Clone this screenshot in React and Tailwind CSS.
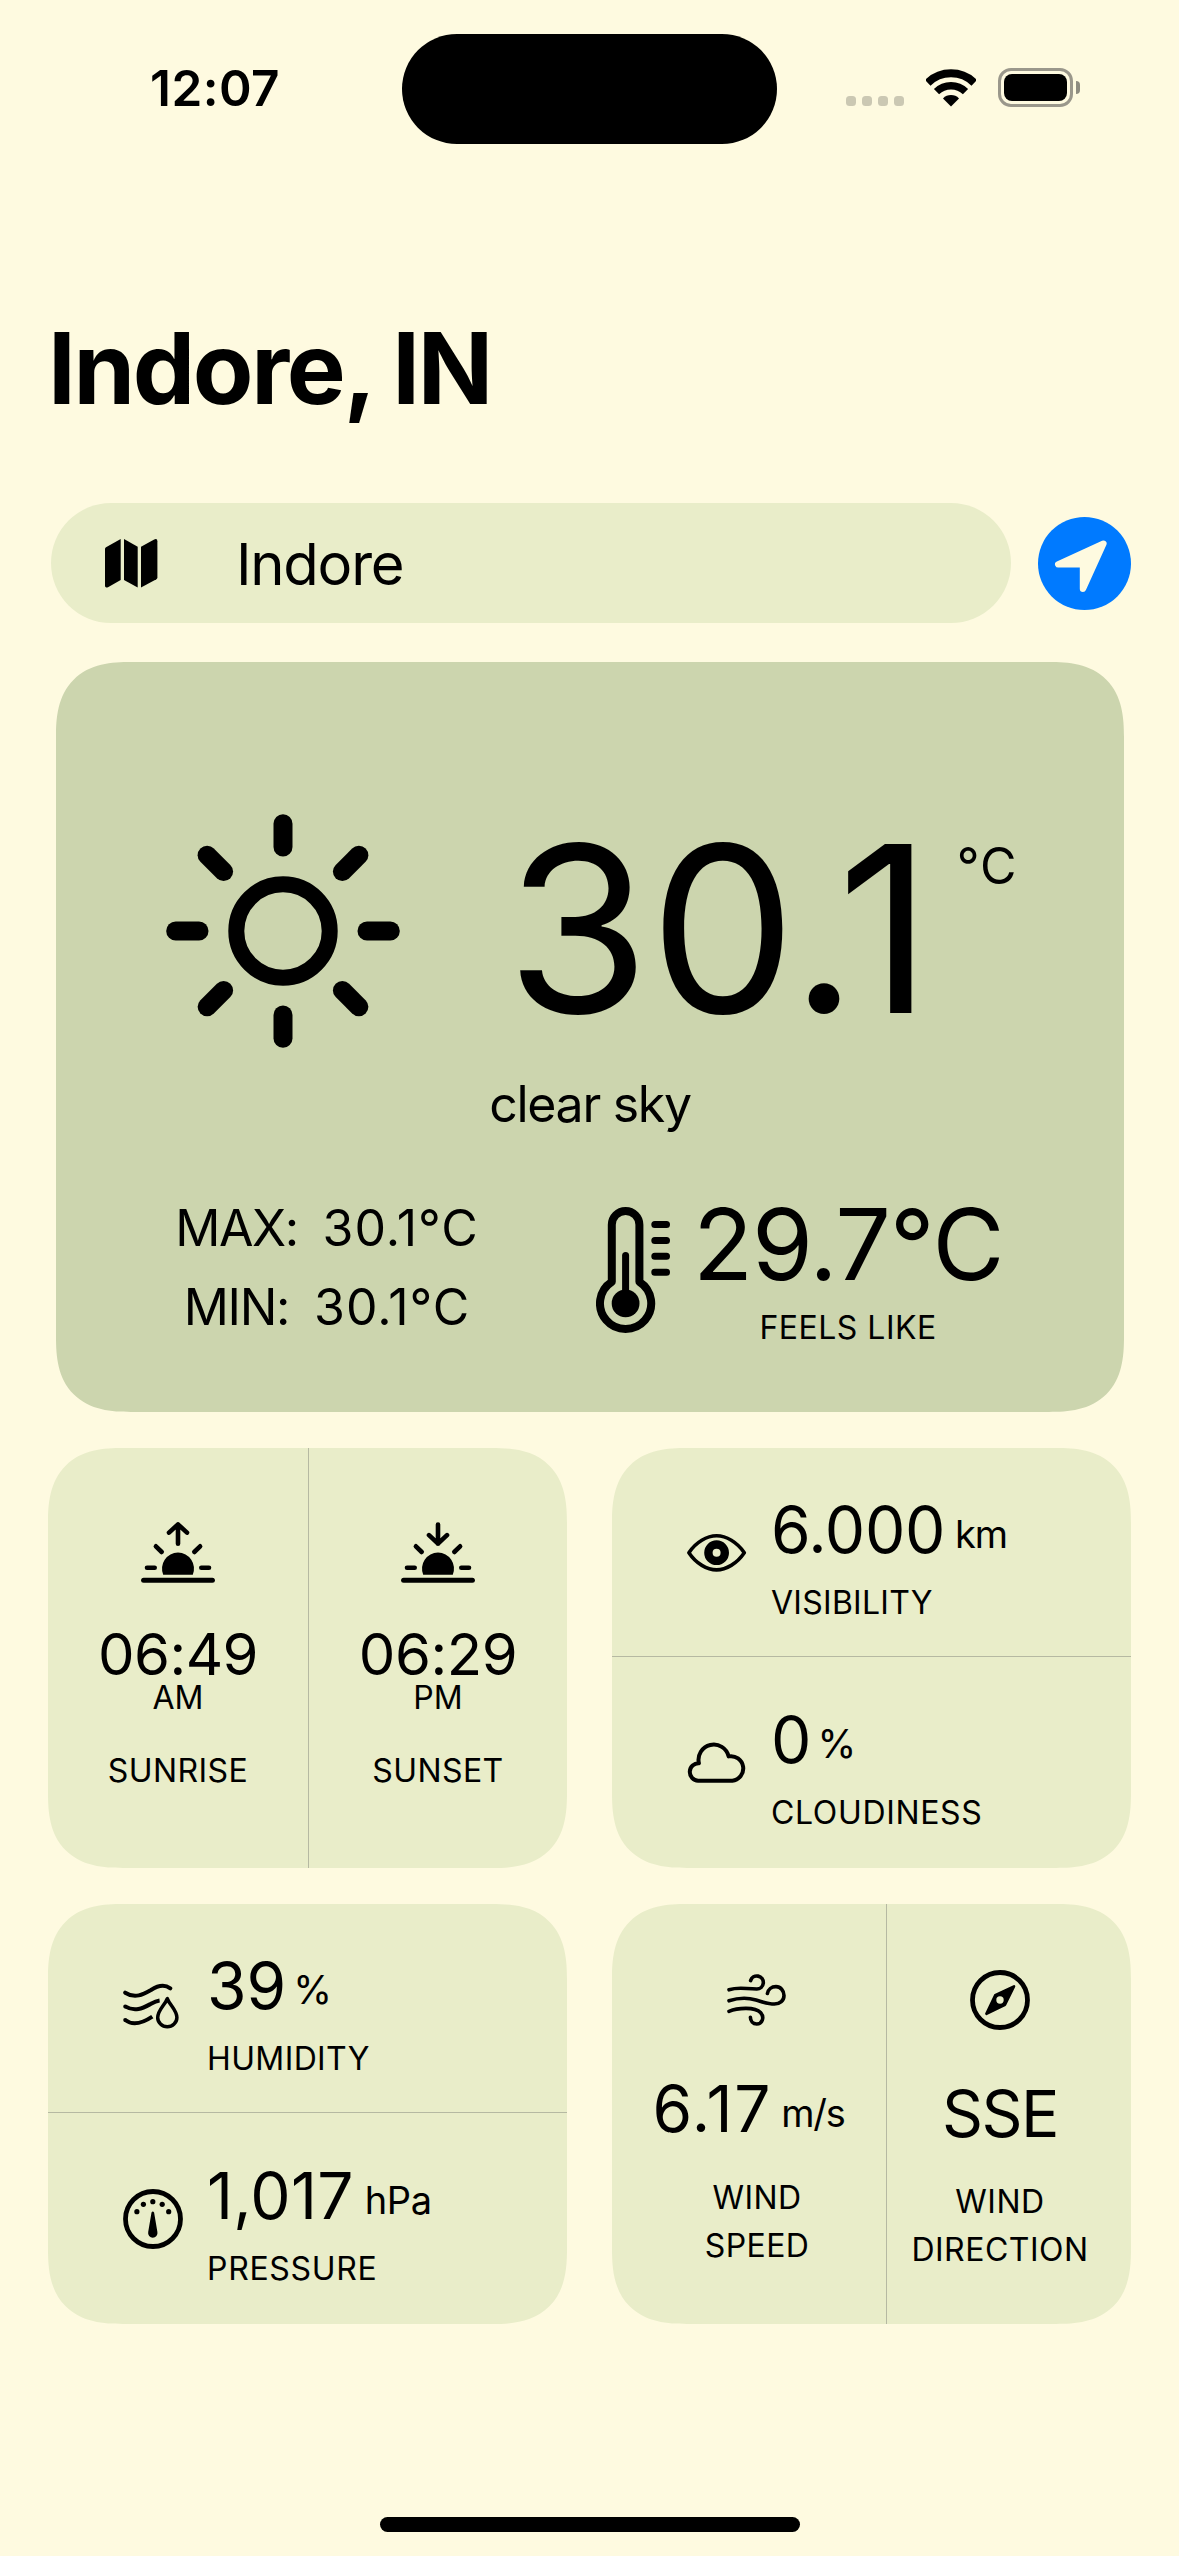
import React from "react";

function WifiIcon() {
  return (
    <svg className="h-[38px] w-[50px]" viewBox="0 0 50 38" fill="none">
      <path d="M1.7 13.8A33.2 33.2 0 0 1 48.3 13.8" stroke="#000" strokeWidth="8" />
      <path d="M10.5 22.7A20.7 20.7 0 0 1 39.5 22.7" stroke="#000" strokeWidth="7.4" />
      <path d="M25 37.5L17 29.4A11.4 11.4 0 0 1 33 29.4Z" fill="#000" />
    </svg>
  );
}

function Battery() {
  return (
    <div className="flex items-center gap-[3px]">
      <div className="flex h-[39px] w-[75px] items-center justify-center rounded-[13px] border-[3px] border-[#9a978b]">
        <div className="h-[27px] w-[63px] rounded-[8px] bg-black" />
      </div>
      <div className="h-[13px] w-[4px] rounded-r-full bg-[#8e8c80]" />
    </div>
  );
}

function StatusBar() {
  return (
    <header className="flex h-[177px] items-center">
      <div className="w-[402px] pb-[2px] pl-[150px] text-[49.5px] leading-[60px] font-semibold tracking-[0.009em]">12:07</div>
      <div className="mt-px h-[110px] w-[375px] rounded-full bg-black" />
      <div className="ml-[69px] flex h-[39px] items-end gap-[6px]">
        {[0, 1, 2, 3].map((i) => (
          <div key={i} className="mb-[2px] size-[10px] rounded-[3.5px] bg-[#cbc8b3]" />
        ))}
      </div>
      <div className="ml-[22px] pb-[2px]"><WifiIcon /></div>
      <div className="ml-[22px] pb-[2px]"><Battery /></div>
    </header>
  );
}

function MapIcon() {
  return (
    <svg className="h-[49px] w-[53px]" viewBox="0 0 53 49" fill="#000">
      <path d="M0 9.8Q0 8.8 1 8.2L15.7 0V41L3 48.2Q0 49.4 0 46.8Z" />
      <path d="M19 0L32.7 7.7V48.5L19 41Z" />
      <path d="M36 7.7L49.2 .4Q52.4 -.9 52.4 2.2V38.4Q52.4 39.6 51.4 40.2L36 48.5Z" />
    </svg>
  );
}

function LocationButton() {
  return (
    <button className="flex size-[93px] items-center justify-center rounded-full bg-[#007aff]">
      <svg className="size-[93px]" viewBox="0 0 93 93">
        <path d="M65.4 26.7L20.2 47.3H45V71.8Z" fill="#fefae0" stroke="#fefae0" strokeWidth="6.4" strokeLinejoin="round" />
      </svg>
    </button>
  );
}

function SunIcon() {
  return (
    <svg className="size-[234px]" viewBox="-117 -117 234 234" fill="none" stroke="#000">
      <circle r="46.7" strokeWidth="16" />
      {[0, 45, 90, 135, 180, 225, 270, 315].map((a) => (
        <path key={a} d="M0 -84V-107.3" strokeWidth="19" strokeLinecap="round" transform={`rotate(${a})`} />
      ))}
    </svg>
  );
}

function ThermometerIcon() {
  return (
    <svg className="h-[127px] w-[75px]" viewBox="0 0 75 127" fill="none" stroke="#000" strokeLinecap="round" strokeLinejoin="round">
      <path d="M15.8 17.8A13.8 13.8 0 0 1 43.4 17.8V74.8A25.6 25.6 0 1 1 15.8 74.8Z" strokeWidth="8" />
      <path d="M29.6 48.5V90" strokeWidth="7" />
      <circle cx="29.6" cy="96.4" r="13.9" fill="#000" stroke="none" />
      <path d="M58.8 17.5H70.5M58.8 33.4H70.5M58.8 49.3H70.5M58.8 65.3H70.5" strokeWidth="7" />
    </svg>
  );
}

function HorizonIcon({ rising }) {
  return (
    <svg className="h-[62px] w-[74px]" viewBox="0 0 74 62" fill="none" stroke="#000" strokeWidth="4.6" strokeLinecap="round" strokeLinejoin="round">
      <path d="M2.6 58.2H71.4" strokeWidth="5" />
      <path d="M6 45.7H13.7M60.3 45.7H68M14.9 24.3L20.7 30M59.1 24.3L53.3 30" />
      <path d="M22.2 52.7A16 16 0 1 1 51.8 52.7Z" fill="#000" stroke="none" />
      {rising ? (
        <path d="M37 2.5V21.7M28 10.6L37 2.4L46 10.6" />
      ) : (
        <path d="M37 2.5V21.7M28 13.2L37 21.7L46 13.2" />
      )}
    </svg>
  );
}

function EyeIcon() {
  return (
    <svg className="size-[60px]" viewBox="0 0 60 60" fill="none" stroke="#000">
      <path d="M1.9 29.7C9 19 20 12.8 29.6 12.8S50 19 57.3 29.7C50 40.5 39 46.9 29.6 46.9S9 40.5 1.9 29.7Z" strokeWidth="3.6" strokeLinejoin="round" />
      <circle cx="29.6" cy="29.7" r="8.2" strokeWidth="8.4" />
    </svg>
  );
}

function CloudIcon() {
  return (
    <svg className="size-[60px]" viewBox="0 0 60 60" fill="none" stroke="#000" strokeWidth="4" strokeLinejoin="round">
      <path d="M11.1 47.7H45.3A12.3 12.3 0 1 0 41.6 23.4A15.2 15.2 0 0 0 11.9 30.3A8.7 8.7 0 0 0 11.1 47.7Z" />
    </svg>
  );
}

function HumidityIcon() {
  return (
    <svg className="size-[60px]" viewBox="0 0 60 60" fill="none" stroke="#000" strokeWidth="4" strokeLinejoin="round">
      <path d="M2.2 13.7C12 20 20 15.5 28 11C35 6.5 42 5.5 47.3 9.3" strokeLinecap="round" />
      <path d="M2.2 27.4C12 33.5 20 29 28 24.8C31 23 33.5 21.8 36.6 21.4" />
      <path d="M2.2 41C10 47 20 43.8 29.3 37.6" />
      <path d="M2.2 27.4h.01M2.2 41h.01" strokeLinecap="round" />
      <path d="M44.3 19.6C42 26 34.7 31 34.7 38.6A9.6 9.2 0 0 0 53.9 38.6C53.9 31 46.6 26 44.3 19.6Z" strokeWidth="3.5" />
    </svg>
  );
}

function GaugeIcon() {
  return (
    <svg className="size-[60px]" viewBox="0 0 60 60">
      <circle cx="30" cy="30" r="27.5" fill="none" stroke="#000" strokeWidth="4.8" />
      {[[13.9, 22.7], [20.4, 15.3], [29.8, 12.7], [39.2, 15.3], [45.7, 22.7]].map(([x, y]) => (
        <circle key={x} cx={x} cy={y} r="2.6" />
      ))}
      <path d="M28.5 23.6Q29.8 21.4 31.1 23.6L34.4 43A4.7 4.7 0 1 1 25.2 43Z" />
    </svg>
  );
}

function WindIcon() {
  return (
    <svg className="h-[52px] w-[60px]" viewBox="0 0 60 52" fill="none" stroke="#000" strokeWidth="3.6" strokeLinecap="round">
      <path d="M2 15.8C12 12.6 18 15 29.7 15A6.5 6.5 0 1 0 23.6 6.6" />
      <path d="M2 26.8C12 23.5 20 23.3 29 26C36 28 41 30 47.4 30C53 30 57 26.5 57 21.5C57 16.5 53.5 12.6 49 12.6C44.5 12.6 41 15.5 40.4 19.5" />
      <path d="M2 37.3C10 34 28 32.5 33.5 38.5C38 43.5 35 50 29.7 50C26 50 23.4 47 23.4 43.3" />
    </svg>
  );
}

function CompassIcon() {
  return (
    <svg className="size-[60px]" viewBox="0 0 60 60">
      <circle cx="30" cy="30" r="27.5" fill="none" stroke="#000" strokeWidth="4.8" />
      <path d="M44 16.4L35 34.8L16.4 43.8L25.2 25.2Z" stroke="#000" strokeWidth="2.6" strokeLinejoin="round" />
      <circle cx="30" cy="30" r="3.7" fill="#e9edc9" />
    </svg>
  );
}

function Card({ className, children }) {
  return (
    <section className={`overflow-hidden rounded-[75px] [corner-shape:superellipse(1.37)] ${className}`}>
      {children}
    </section>
  );
}

function Metric({ icon, value, valueClass = "", unit, unitClass, label, labelClass, className }) {
  return (
    <div className={`flex pl-[75px] ${className}`}>
      <div className="mt-[25px] mr-[24px] size-[60px]">{icon}</div>
      <div>
        <div className="flex h-[64px]">
          <span className={`text-[64px] leading-[64px] ${valueClass}`}>{value}</span>
          <span className={`pt-[4px] leading-[64px] ${unitClass}`}>{unit}</span>
        </div>
        <div className={`mt-[19px] text-[32px] leading-[44px] ${labelClass}`}>{label}</div>
      </div>
    </div>
  );
}

function SunTime({ rising, time, timeClass, half, label, className }) {
  return (
    <div className={`flex flex-col items-center pt-[74px] ${className}`}>
      <HorizonIcon rising={rising} />
      <div className={`mt-[48px] text-[58px] leading-[44px] ${timeClass}`}>{time}</div>
      <div className="text-[32px] leading-[44px]">{half}</div>
      <div className="mt-[29px] text-[32px] leading-[44px] tracking-[0.013em]">{label}</div>
    </div>
  );
}

export default function App() {
  return (
    <div className="flex h-[2556px] w-[1179px] flex-col overflow-hidden bg-[#fefae0] font-[Inter,sans-serif] whitespace-nowrap text-black">
      <StatusBar />

      <h1 className="mt-[131px] pl-[48px] text-[99px] leading-[120px] font-bold tracking-[-0.0235em]">Indore, IN</h1>

      <div className="mt-[75px] flex items-center gap-[27px] pl-[51px]">
        <div className="flex h-[120px] w-[960px] items-center rounded-[60px] bg-[#e9edc9] pl-[54px]">
          <MapIcon />
          <span className="ml-[78px] pt-[2px] text-[58px] leading-[72px] tracking-[-0.0215em]">Indore</span>
        </div>
        <LocationButton />
      </div>

      <Card className="mx-[56px] mt-[39px] h-[750px] w-[1068px] shrink-0 bg-[#ccd5ae] pt-[152px]">
        <div className="flex h-[234px] pl-[110px]">
          <SunIcon />
          <span className="ml-[106px] text-[232.5px] leading-[229px]">30.1</span>
          <span className="ml-[25px] text-[50px] leading-[104px] tracking-[0.02em]">°C</span>
        </div>
        <div className="mt-[26px] text-center text-[50px] leading-[60px] tracking-[-0.0255em]">clear sky</div>
        <div className="mt-[54px] flex">
          <div className="ml-[121px] w-[300px] pt-[1px] text-[50px] leading-[79px]">
            <div className="flex justify-center gap-[25px]">
              <span className="tracking-[-0.029em]">MAX:</span>
              <span className="tracking-[0.0196em]">30.1°C</span>
            </div>
            <div className="flex justify-center gap-[25px]">
              <span className="tracking-[-0.0264em]">MIN:</span>
              <span className="tracking-[0.0196em]">30.1°C</span>
            </div>
          </div>
          <div className="mt-[19px] ml-[119px]"><ThermometerIcon /></div>
          <div className="ml-[22px] flex flex-col items-center">
            <span className="pt-px text-[98.5px] leading-[112px] tracking-[-0.0117em]">29.7°C</span>
            <span className="pt-px text-[32px] leading-[52px] tracking-[0.0153em]">FEELS LIKE</span>
          </div>
        </div>
      </Card>

      <main className="mt-[36px] grid grid-cols-[519px_519px] gap-x-[45px] gap-y-[36px] pl-[48px]">
        <Card className="flex h-[420px] bg-[#e9edc9]">
          <SunTime rising time="06:49" timeClass="tracking-[-0.0095em]" half="AM" label="SUNRISE" className="w-[260px]" />
          <div className="w-px bg-[#b6b9a2]" />
          <SunTime time="06:29" timeClass="tracking-[-0.0075em]" half="PM" label="SUNSET" className="w-[258px]" />
        </Card>

        <Card className="h-[420px] bg-[#e9edc9]">
          <Metric className="h-[208px] pt-[50px]" icon={<EyeIcon />} value="6.000" valueClass="tracking-[-0.0043em]" unit="km" unitClass="ml-[10px] text-[38px] tracking-[-0.03em]" label="VISIBILITY" labelClass="tracking-[0.0086em]" />
          <div className="h-px bg-[#b6b9a2]" />
          <Metric className="h-[211px] pt-[51px]" icon={<CloudIcon />} value="0" unit="%" unitClass="ml-[6px] text-[39.5px]" label="CLOUDINESS" labelClass="tracking-[0.0204em]" />
        </Card>

        <Card className="h-[420px] bg-[#e9edc9]">
          <Metric className="h-[208px] pt-[50px]" icon={<HumidityIcon />} value="39" unit="%" unitClass="ml-[7px] text-[39.5px]" label="HUMIDITY" labelClass="tracking-[0.012em]" />
          <div className="h-px bg-[#b6b9a2]" />
          <Metric className="h-[211px] pt-[51px]" icon={<GaugeIcon />} value="1,017" valueClass="tracking-[0.004em]" unit="hPa" unitClass="ml-[11px] text-[38px] tracking-[-0.01em]" label="PRESSURE" labelClass="tracking-[0.0217em]" />
        </Card>

        <Card className="flex h-[420px] bg-[#e9edc9]">
          <div className="flex w-[274px] flex-col items-center pt-[70px] pl-[16px]">
            <WindIcon />
            <div className="mt-[51px] flex h-[64px] pr-[17px]">
              <span className="text-[64px] leading-[64px] tracking-[0.0278em]">6.17</span>
              <span className="ml-[9px] pt-[4px] text-[38px] leading-[64px] tracking-[-0.0326em]">m/s</span>
            </div>
            <div className="mt-[33px] text-center text-[32px] leading-[48px] tracking-[0.013em]">WIND<br />SPEED</div>
          </div>
          <div className="w-px bg-[#b6b9a2]" />
          <div className="flex w-[244px] flex-col items-center pt-[66px] pr-[18px]">
            <CompassIcon />
            <div className="mt-[52px] text-[64px] leading-[64px] tracking-[-0.025em]">SSE</div>
            <div className="mt-[32px] text-center text-[32px] leading-[48px] tracking-[0.015em]">WIND<br />DIRECTION</div>
          </div>
        </Card>
      </main>

      <div className="mx-auto mt-[193px] h-[15px] w-[420px] shrink-0 rounded-full bg-black" />
    </div>
  );
}
